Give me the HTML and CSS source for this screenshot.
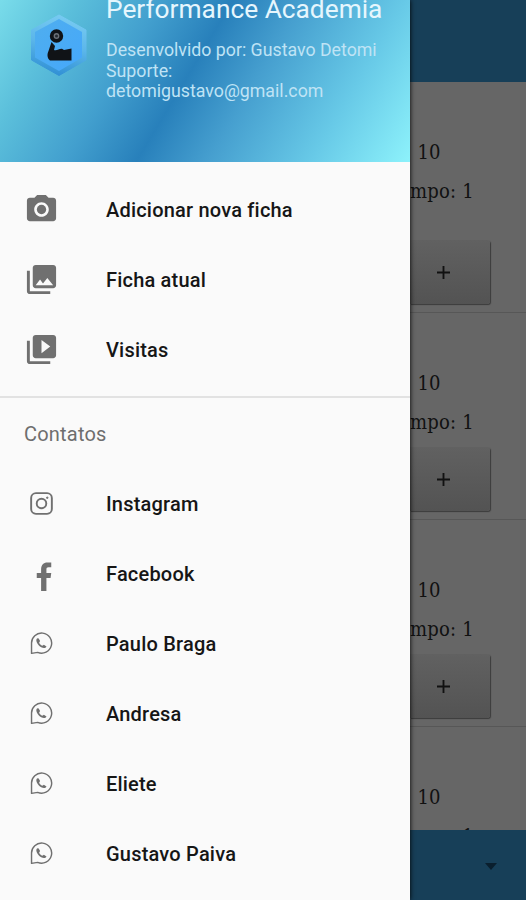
FILE: index.html
```html
<!DOCTYPE html>
<html lang="pt-BR">
<head>
<meta charset="utf-8">
<title>Performance Academia</title>
<link rel="stylesheet" href="styles.css">
</head>
<body>
<svg class="defs" aria-hidden="true">
  <symbol id="whatsapp" viewBox="0 0 24 24">
    <path d="M1.600 22.300V12A10.500 10.500 0 1 1 8 21.300Z" fill="none" stroke="currentColor" stroke-width="1.500" stroke-linejoin="round"/>
    <path d="M8 6.600c-.9.300-1.500 1.200-1.400 2.300.3 3.600 4.200 7.600 8 7.900 1.300.1 2.400-.6 2.600-1.600l-2.700-1.900-1.700 1.100c-1.500-.7-2.600-1.800-3.300-3.300l1-1.600-1.400-2.700Z" fill="currentColor"/>
  </symbol>
</svg>
<div class="screen">
  <main class="page">
    <header class="topbar"></header>
    <div class="list">
      <section class="item first"><p class="reps">10</p><p class="time">mpo: 1</p><button class="plus"><svg viewBox="0 0 14 14"><path d="M7 0v14M0 7h14"/></svg></button></section>
      <section class="item"><p class="reps">10</p><p class="time">mpo: 1</p><button class="plus"><svg viewBox="0 0 14 14"><path d="M7 0v14M0 7h14"/></svg></button></section>
      <section class="item"><p class="reps">10</p><p class="time">mpo: 1</p><button class="plus"><svg viewBox="0 0 14 14"><path d="M7 0v14M0 7h14"/></svg></button></section>
      <section class="item"><p class="reps">10</p><p class="time">mpo: 1</p></section>
    </div>
    <footer class="bottombar"><svg class="caret" viewBox="0 0 12 7"><path d="M0 0h12L6 7Z"/></svg></footer>
  </main>
  <aside class="drawer">
    <header class="head">
      <svg class="logo" viewBox="0 0 58 64">
        <defs>
          <linearGradient id="rim" x1="0.6" y1="0" x2="0.4" y2="1"><stop offset="0" stop-color="#78cbf2"/><stop offset="0.5" stop-color="#5bb6ea"/><stop offset="1" stop-color="#2f8fd4"/></linearGradient>
          <linearGradient id="face" x1="0" y1="0" x2="1" y2="1"><stop offset="0" stop-color="#4faeee"/><stop offset="1" stop-color="#45a8fb"/></linearGradient>
        </defs>
        <path d="M29 2 56 17V47L29 62.500 1.500 47V17Z" fill="url(#rim)" stroke="url(#rim)" stroke-linejoin="round"/>
        <path d="M29 6 52 19V44.500L29 58 5 44.500V19Z" fill="url(#face)"/>
        <circle cx="26.500" cy="23" r="4.800" fill="#6b7077" stroke="#101317" stroke-width="3.800"/>
        <circle cx="26.500" cy="23" r="1.500" fill="#252a30"/>
        <path d="M21.500 29 25 33 24 37c3 1 5-1.500 8-1.300l2 1.300 7.500-1.500V47.500H20c-3-2.500-3-6.500-1.500-9.500Z" fill="#101317"/>
      </svg>
      <div class="about">
        <h1>Performance Academia</h1>
        <p class="dev">Desenvolvido por: Gustavo Detomi</p>
        <p class="sup">Suporte:</p>
        <p class="mail">detomigustavo@gmail.com</p>
      </div>
    </header>
    <nav class="menu">
      <a class="row"><svg class="icon md" viewBox="0 0 24 24"><path fill-rule="evenodd" d="M9 2 7.170 4H4c-1.100 0-2 .9-2 2v12c0 1.100.9 2 2 2h16c1.100 0 2-.9 2-2V6c0-1.100-.9-2-2-2h-3.170L15 2H9zm3 15c-2.760 0-5-2.240-5-5s2.240-5 5-5 5 2.240 5 5-2.240 5-5 5z"/><circle cx="12" cy="12" r="3.200"/></svg><span>Adicionar nova ficha</span></a>
      <a class="row"><svg class="icon md" viewBox="0 0 24 24"><path d="M22 16V4c0-1.100-.9-2-2-2H8c-1.100 0-2 .9-2 2v12c0 1.100.9 2 2 2h12c1.100 0 2-.9 2-2zm-11-4 2.030 2.710L16 11l4 5H8l3-4zM2 6v14c0 1.100.9 2 2 2h14v-2H4V6H2z"/></svg><span>Ficha atual</span></a>
      <a class="row"><svg class="icon md" viewBox="0 0 24 24"><path d="M4 6H2v14c0 1.100.9 2 2 2h14v-2H4V6zm16-4H8c-1.100 0-2 .9-2 2v12c0 1.100.9 2 2 2h12c1.100 0 2-.9 2-2V4c0-1.100-.9-2-2-2zm-8 12.500v-9l6 4.500-6 4.500z"/></svg><span>Visitas</span></a>
    </nav>
    <nav class="contacts">
      <h2>Contatos</h2>
      <a class="row"><svg class="icon ig" viewBox="0 0 24 24" fill="none" stroke="currentColor" stroke-width="2"><rect x="1.200" y="1.200" width="21.600" height="21.600" rx="5"/><circle cx="12" cy="12" r="5"/><circle cx="18" cy="6" r=".8" fill="currentColor" stroke-width="1"/></svg><span>Instagram</span></a>
      <a class="row"><svg class="icon fb" viewBox="0 0 16 30"><path d="M5 30V16.500H.500V11.500H5V7.500C5 3 7.500.500 11.500.500h4v5h-2.800C11 5.500 10.500 6.300 10.500 7.700v3.800h5l-.7 5h-4.300V30Z"/></svg><span>Facebook</span></a>
      <a class="row"><svg class="icon wa"><use href="#whatsapp"/></svg><span>Paulo Braga</span></a>
      <a class="row"><svg class="icon wa"><use href="#whatsapp"/></svg><span>Andresa</span></a>
      <a class="row"><svg class="icon wa"><use href="#whatsapp"/></svg><span>Eliete</span></a>
      <a class="row"><svg class="icon wa"><use href="#whatsapp"/></svg><span>Gustavo Paiva</span></a>
    </nav>
  </aside>
</div>
</body>
</html>
```
FILE: styles.css
```css
* { box-sizing: border-box; margin: 0; padding: 0; }
body { width: 526px; height: 900px; overflow: hidden; font-family: Roboto, sans-serif; }
.defs { display: none; }
.screen { position: relative; width: 526px; height: 900px; overflow: hidden; }

.page { display: flex; flex-direction: column; height: 900px; background: #666; }
.topbar { height: 82px; flex: none; background: #173f58; }
.list { flex: 1; min-height: 0; overflow: hidden; }
.bottombar { height: 70px; flex: none; display: flex; align-items: center; justify-content: flex-end; padding: 2px 29px 0 0; background: #173f58; }
.caret { width: 12px; height: 7px; fill: #0a1f2e; }

.item { height: 207px; padding: 51px 0 0 410px; border-bottom: 1px solid #575757; color: #111;
  font: condensed 20px/38.5px "DejaVu Serif Condensed", "DejaVu Serif", serif; }
.item.first { height: 231px; }
.item p { height: 38.5px; white-space: nowrap; }
.item .reps { padding-left: 7.5px; }
.item .time { letter-spacing: 0.2px; }
.plus { display: flex; align-items: center; justify-content: center; width: 80px; height: 64px; margin-top: 6px;
  padding-right: 13px; border: 0; border-radius: 0 3px 3px 0; background: linear-gradient(#616161, #535353);
  box-shadow: 1px 1px 1px #3b3b3b; }
.first .plus { margin-top: 30px; }
.plus svg { width: 13px; height: 13px; fill: none; stroke: #111; stroke-width: 2; }

.drawer { position: absolute; top: 0; left: 0; width: 410px; height: 900px; background: #fafafa; box-shadow: 0 0 5px #000; }
.head { display: flex; height: 162px; overflow: hidden;
  background: linear-gradient(121deg, #79dcea 0%, #5bbfdb 15%, #429fce 32%, #2880bb 46%, #469fcf 60%, #67c9e7 80%, #8df2fb 100%); }
.logo { width: 58px; height: 64px; margin: 13px 0 0 30px; flex: none; }
.about { margin-left: 18px; white-space: nowrap; color: #bfe3f5; font-size: 17.75px; line-height: 20.5px; }
.about h1 { height: 40px; margin-top: -6px; margin-bottom: 6px; color: #e6f6fd; font-size: 26.3px; font-weight: 400; line-height: 31px; }

.menu { height: 236px; padding-top: 13px; border-bottom: 2px solid #e2e2e2; }
.row { display: flex; align-items: center; height: 70px; color: #161616; font-size: 20px; font-weight: 500; }
.row span { white-space: nowrap; }
.icon { flex: none; fill: #707070; color: #707070; }
.md { width: 35px; height: 35px; margin: 0 47px 2px 24px; }
.ig { fill: none; width: 23px; height: 23px; margin: 0 53px 2px 30px; }
.fb { width: 16px; height: 29px; margin: 4px 54px 0 36px; }
.wa { width: 23px; height: 23px; margin: 0 53px 2px 30px; }
.contacts h2 { height: 71px; padding-left: 24px; color: #6e6e6e; font-size: 20px; font-weight: 400; line-height: 72px; }
.row span, .contacts h2 { letter-spacing: 0.2px; }
```
